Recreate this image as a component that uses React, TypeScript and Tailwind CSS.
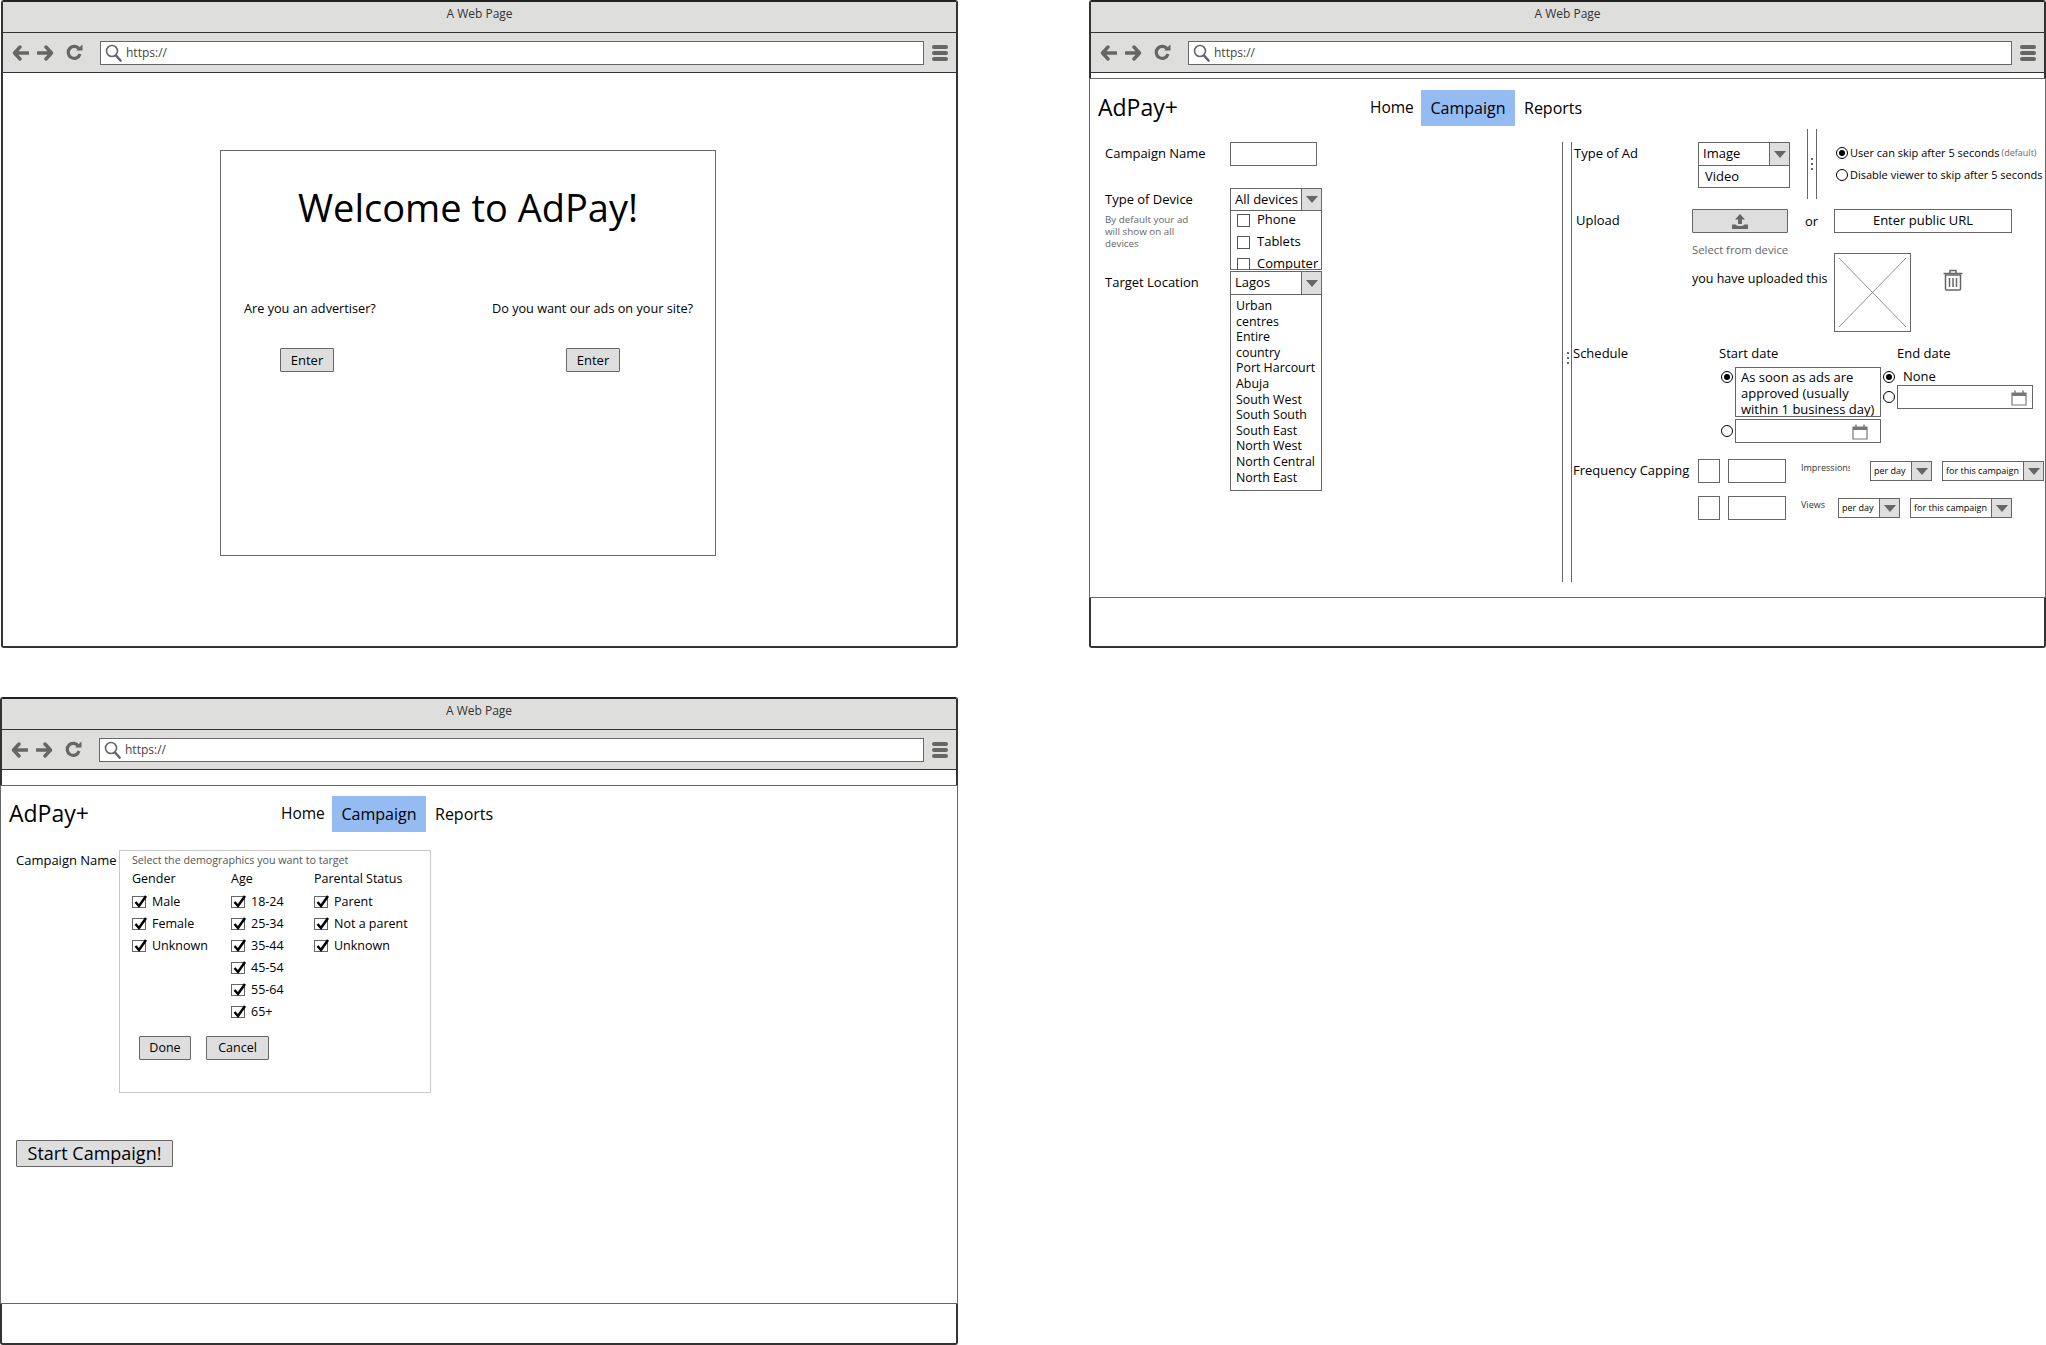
import type { ReactNode } from 'react'

function BackIcon({ flip }: { flip?: boolean }) {
  return (
    <svg width="17" height="16" viewBox="0 0 17 16" className={flip ? '-scale-x-100' : ''}>
      <path d="M8 2 2.5 8 8 14M3 8h13" fill="none" stroke="#666" strokeWidth="3.4" strokeLinecap="round" strokeLinejoin="round" />
    </svg>
  )
}

function ReloadIcon() {
  return (
    <svg width="17" height="17" viewBox="0 0 17 17">
      <path d="M13.5 5.5A6 6 0 1 0 14 10" fill="none" stroke="#666" strokeWidth="3.2" />
      <path d="M10 6.5h6.5V0.5z" fill="#666" />
    </svg>
  )
}

function SearchIcon() {
  return (
    <svg width="17" height="18" viewBox="0 0 17 18" className="shrink-0">
      <circle cx="7" cy="7" r="5.5" fill="none" stroke="#666" strokeWidth="1.6" />
      <path d="m11 11.5 4.5 5" stroke="#666" strokeWidth="2.6" strokeLinecap="round" />
    </svg>
  )
}

function Browser({ className, children }: { className: string; children?: ReactNode }) {
  return (
    <div className={`flex flex-col rounded-[3px] border-2 border-[#333] border-t-[#222] bg-white ${className}`}>
      <div className="flex h-[31px] shrink-0 justify-center border-b border-[#333] bg-[#dededd] pt-[4px] text-[12px] leading-[16px] text-[#333]">
        A Web Page
      </div>
      <div className="flex h-[40px] shrink-0 items-center border-b border-[#333] bg-[#dededd] pl-[9px] pr-[8px]">
        <BackIcon />
        <span className="ml-[8px] flex"><BackIcon flip /></span>
        <span className="ml-[12px] flex"><ReloadIcon /></span>
        <div className="ml-[17px] flex h-[24px] flex-1 items-center gap-[4px] border border-[#666] bg-white pl-[4px] text-[12px] text-[#444]">
          <SearchIcon />
          <span className="pt-[1px]">https://</span>
        </div>
        <div className="ml-[8px] flex w-[16px] flex-col gap-[2px]">
          <span className="h-[4px] rounded-[2px] bg-[#666]" />
          <span className="h-[4px] rounded-[2px] bg-[#666]" />
          <span className="h-[4px] rounded-[2px] bg-[#666]" />
        </div>
      </div>
      {children}
    </div>
  )
}

function GrayButton({ className, children }: { className: string; children: ReactNode }) {
  return (
    <div className={`flex items-center justify-center rounded-[1px] border border-[#666] bg-[#dedede] text-black ${className}`}>
      {children}
    </div>
  )
}

function Header() {
  return (
    <div className="flex h-[36px] shrink-0 items-center">
      <div className="w-[280px] pb-[2px] pl-[8px] text-[23px] leading-none">AdPay+</div>
      <span className="w-[41px] whitespace-nowrap text-[15.5px]">Home</span>
      <div className="ml-[10px] flex h-[36px] w-[94px] items-center justify-center bg-[#94bbf2] pb-[1px] text-[16px]">
        Campaign
      </div>
      <span className="ml-[9px] pb-[1px] text-[16px]">Reports</span>
    </div>
  )
}

function Arrow() {
  return (
    <svg width="12" height="7" viewBox="0 0 12 7">
      <path d="M0 0h12L6 7z" fill="#666" />
    </svg>
  )
}

function Combo({
  className,
  textClass = 'pl-[4px] text-[13px]',
  children,
}: {
  className: string
  textClass?: string
  children: ReactNode
}) {
  return (
    <div className={`flex border border-[#666] bg-white ${className}`}>
      <div className={`flex flex-1 items-center whitespace-nowrap ${textClass}`}>{children}</div>
      <div className="flex w-[20px] items-center justify-center border-l border-[#666] bg-[#dedede]">
        <Arrow />
      </div>
    </div>
  )
}

function Radio({ on }: { on?: boolean }) {
  return (
    <span className="flex h-[12px] w-[12px] shrink-0 items-center justify-center rounded-full border border-black bg-white">
      {on && <span className="h-[6px] w-[6px] rounded-full bg-black" />}
    </span>
  )
}

function CalendarIcon() {
  return (
    <svg width="16" height="17" viewBox="0 0 16 17">
      <path d="M1 4h14v12H1z" fill="#fff" stroke="#777" strokeWidth="1.2" />
      <path d="M1 4h14v3H1z" fill="#777" />
      <path d="M4 1.5V5M12 1.5V5" stroke="#777" strokeWidth="1.4" />
    </svg>
  )
}

function DateInput({ className }: { className: string }) {
  return (
    <div className={`flex h-[24px] items-center justify-end border border-[#666] bg-white ${className}`}>
      <CalendarIcon />
    </div>
  )
}

function Dots() {
  return (
    <div className="flex flex-col gap-[3px]">
      <span className="h-[2px] w-[2px] bg-[#666]" />
      <span className="h-[2px] w-[2px] bg-[#666]" />
      <span className="h-[2px] w-[2px] bg-[#666]" />
    </div>
  )
}

function UploadIcon() {
  return (
    <svg width="16" height="15" viewBox="0 0 16 15">
      <path d="M8 0 3 5.5h3v4.5h4V5.5h3z" fill="#666" />
      <path d="M0 10.5h3.5q1 1.5 4.5 1.5t4.5-1.5H16V15H0z" fill="#666" />
    </svg>
  )
}

function TrashIcon() {
  return (
    <svg width="20" height="22" viewBox="0 0 20 22">
      <path d="M2.5 6h15v14q0 1-1 1h-13q-1 0-1-1z" fill="#fff" stroke="#666" strokeWidth="1.5" />
      <path d="M0.5 4.5h19M7 4V1.5h6V4" fill="none" stroke="#666" strokeWidth="1.5" />
      <path d="M6.5 9v9M10 9v9M13.5 9v9" stroke="#666" strokeWidth="1.5" />
    </svg>
  )
}

function DeviceOption({ label }: { label: string }) {
  return (
    <div className="flex h-[22px] shrink-0 items-center pl-[6px] text-[13px]">
      <span className="h-[13px] w-[13px] border border-[#555]" />
      <span className="ml-[7px]">{label}</span>
    </div>
  )
}

const locations = [
  'Urban',
  'centres',
  'Entire',
  'country',
  'Port Harcourt',
  'Abuja',
  'South West',
  'South South',
  'South East',
  'North West',
  'North Central',
  'North East',
]

function CampaignLeft() {
  return (
    <div className="w-[472px] shrink-0 pl-[15px]">
      <div className="flex">
        <div className="w-[125px] pt-[2px] text-[13px]">Campaign Name</div>
        <div className="h-[24px] w-[87px] border border-[#666]" />
      </div>
      <div className="mt-[22px] flex">
        <div className="w-[125px]">
          <div className="pt-[1px] text-[13px] leading-[20px]">Type of Device</div>
          <div className="mt-[5px] text-[9.8px] leading-[12px] text-[#666]">
            By default your ad
            <br />
            will show on all
            <br />
            devices
          </div>
        </div>
        <div className="flex h-[82px] w-[92px] flex-col">
          <Combo className="h-[23px] shrink-0">All devices</Combo>
          <div className="h-[59px] overflow-hidden border-x border-b border-[#666]">
            <div className="-mt-[2px]">
              <DeviceOption label="Phone" />
              <DeviceOption label="Tablets" />
              <DeviceOption label="Computer" />
            </div>
          </div>
        </div>
      </div>
      <div className="mt-[1px] flex">
        <div className="w-[125px] pt-[1px] text-[13px] leading-[20px]">Target Location</div>
        <div className="w-[92px]">
          <Combo className="h-[24px]">Lagos</Combo>
          <div className="h-[196px] border-x border-b border-[#666] pl-[5px] pt-[3px] text-[12.4px] leading-[15.6px]">
            {locations.map((name) => (
              <div key={name}>{name}</div>
            ))}
          </div>
        </div>
      </div>
    </div>
  )
}

function FrequencyRow({
  className,
  label,
  labelClass,
}: {
  className: string
  label: string
  labelClass: string
}) {
  return (
    <div className={`flex ${className}`}>
      <div className="h-[24px] w-[22px] border border-[#666]" />
      <div className="ml-[8px] h-[24px] w-[58px] border border-[#666]" />
      <div className={`ml-[15px] h-[20px] pt-[1px] text-[9px] leading-[16px] text-[#333] ${labelClass}`}>
        <div className="w-[49px] overflow-hidden whitespace-nowrap">{label}</div>
      </div>
      <div className="flex pt-[2px]">
        <Combo className="h-[20px] w-[62px]" textClass="pl-[3px] text-[9px]">per day</Combo>
        <Combo className="ml-[10px] h-[20px] w-[102px]" textClass="pl-[3px] text-[9px]">for this campaign</Combo>
      </div>
    </div>
  )
}

function CampaignRight() {
  return (
    <div className="flex-1">
      <div className="flex">
        <div className="w-[126px] pl-[2px] pt-[1px] text-[13px] leading-[20px]">Type of Ad</div>
        <div className="w-[92px]">
          <Combo className="h-[24px]">Image</Combo>
          <div className="flex h-[22px] items-center border-x border-b border-[#666] pl-[6px] text-[13px]">Video</div>
        </div>
        <div className="ml-[17px] -mt-[13px] flex h-[70px] w-[10px] items-center justify-center border-x border-[#666]">
          <Dots />
        </div>
        <div className="ml-[19px] text-[11px] leading-[16px]">
          <div className="mt-[3px] flex h-[16px] items-center gap-[2px] whitespace-nowrap">
            <Radio on />
            User can skip after 5 seconds
            <span className="text-[9px] text-[#666]">(default)</span>
          </div>
          <div className="mt-[6px] flex h-[16px] items-center gap-[2px] whitespace-nowrap">
            <Radio />
            Disable viewer to skip after 5 seconds
          </div>
        </div>
      </div>
      <div className="mt-[10px] flex">
        <div className="w-[120px] pl-[4px] text-[13px] leading-[22px]">Upload</div>
        <GrayButton className="h-[24px] w-[96px]">
          <UploadIcon />
        </GrayButton>
        <div className="ml-[17px] w-[29px] text-[13px] leading-[24px]">or</div>
        <div className="flex h-[24px] w-[178px] items-center justify-center border border-[#666] text-[13px]">
          Enter public URL
        </div>
      </div>
      <div className="flex pl-[120px]">
        <div className="w-[142px] pt-[10px]">
          <div className="text-[11.3px] leading-[14px] text-[#666]">Select from device</div>
          <div className="mt-[13px] whitespace-nowrap text-[12.5px] leading-[17px]">you have uploaded this</div>
        </div>
        <div className="mt-[20px] h-[79px] w-[77px] border border-[#666] p-[4px]">
          <svg width="67" height="69" viewBox="0 0 67 69">
            <path d="M0 0 67 69M67 0 0 69" stroke="#777" strokeWidth="0.8" />
          </svg>
        </div>
        <div className="ml-[32px] mt-[36px]">
          <TrashIcon />
        </div>
      </div>
      <div className="mt-[11px] flex">
        <div className="relative w-[147px] pl-[1px] text-[13px] leading-[20px]">
          Schedule
          <div className="absolute -left-[5px] top-[9px]">
            <Dots />
          </div>
        </div>
        <div className="w-[162px]">
          <div className="text-[13px] leading-[20px]">Start date</div>
          <div className="mt-[4px] flex gap-[2px] pl-[2px]">
            <div className="pt-[4px]"><Radio on /></div>
            <div className="h-[50px] w-[146px] overflow-hidden border border-[#666] pl-[5px] pt-[1px] text-[13px] leading-[16px]">
              As soon as ads are approved (usually within 1 business day)
            </div>
          </div>
          <div className="mt-[2px] flex items-center gap-[2px] pl-[2px]">
            <Radio />
            <DateInput className="w-[146px] pr-[12px]" />
          </div>
        </div>
        <div className="pl-[2px]">
          <div className="pl-[14px] text-[13px] leading-[20px]">End date</div>
          <div className="mt-[5px] flex h-[17px] items-center">
            <Radio on />
            <span className="ml-[8px] text-[13px]">None</span>
          </div>
          <div className="flex items-center gap-[2px]">
            <Radio />
            <DateInput className="w-[136px] pr-[5px]" />
          </div>
        </div>
      </div>
      <div className="mt-[16px] flex">
        <div className="w-[126px] pl-[1px] text-[13px] leading-[22px]">Frequency Capping</div>
        <div>
          <FrequencyRow className="" label="Impressions" labelClass="w-[69px]" />
          <FrequencyRow className="mt-[13px]" label="Views" labelClass="w-[37px]" />
        </div>
      </div>
    </div>
  )
}

function CheckBox({ label }: { label: string }) {
  return (
    <div className="flex h-[22px] items-center text-[12.5px]">
      <span className="relative h-[12px] w-[14px] border border-[#666]">
        <svg width="16" height="15" viewBox="0 0 16 15" className="absolute -left-[1px] -top-[3px]">
          <path d="M3.5 8 7 12 14 2" fill="none" stroke="#000" strokeWidth="2.5" />
        </svg>
      </span>
      <span className="ml-[6px]">{label}</span>
    </div>
  )
}

function Demographics() {
  return (
    <div className="h-[243px] w-[312px] border border-[#c8c8c8] pl-[12px] pt-[1px]">
      <div className="text-[10.7px] leading-[16px] text-[#555]">Select the demographics you want to target</div>
      <div className="mt-[2px] flex">
        <div className="w-[99px]">
          <div className="h-[21px] text-[12.5px] leading-[18px]">Gender</div>
          {['Male', 'Female', 'Unknown'].map((v) => (
            <CheckBox key={v} label={v} />
          ))}
        </div>
        <div className="w-[83px]">
          <div className="h-[21px] text-[12.5px] leading-[18px]">Age</div>
          {['18-24', '25-34', '35-44', '45-54', '55-64', '65+'].map((v) => (
            <CheckBox key={v} label={v} />
          ))}
        </div>
        <div>
          <div className="h-[21px] text-[12.5px] leading-[18px]">Parental Status</div>
          {['Parent', 'Not a parent', 'Unknown'].map((v) => (
            <CheckBox key={v} label={v} />
          ))}
        </div>
      </div>
      <div className="ml-[7px] mt-[13px] flex text-[12.5px]">
        <GrayButton className="h-[24px] w-[52px]">Done</GrayButton>
        <GrayButton className="ml-[15px] h-[24px] w-[63px]">Cancel</GrayButton>
      </div>
    </div>
  )
}

export default function App() {
  return (
    <div className="h-[1345px] w-[2046px] overflow-hidden bg-white font-['Open_Sans',sans-serif] text-black">
      <div className="flex">
        <Browser className="ml-[1px] h-[648px] w-[957px]">
          <div className="ml-[217px] mt-[77px] h-[406px] w-[496px] border border-[#666]">
            <h1 className="mt-[30px] text-center text-[38px] font-normal leading-[52px]">Welcome to AdPay!</h1>
            <div className="mt-[65px] flex text-[12.7px] leading-[20px]">
              <div className="w-[271px] pl-[23px]">
                Are you an advertiser?
                <GrayButton className="ml-[36px] mt-[30px] h-[24px] w-[54px] text-[13px]">Enter</GrayButton>
              </div>
              <div className="whitespace-nowrap">
                Do you want our ads on your site?
                <GrayButton className="ml-[74px] mt-[30px] h-[24px] w-[54px] text-[13px]">Enter</GrayButton>
              </div>
            </div>
          </div>
        </Browser>
        <Browser className="ml-[131px] h-[648px] w-[957px]">
          <div className="-mx-[2px] mt-[5px] h-[520px] border border-[#666] bg-white">
            <div className="pt-[11px]"><Header /></div>
            <div className="mt-[16px] flex">
              <CampaignLeft />
              <div className="flex h-[440px] w-[9px] shrink-0 border-l border-[#666]" />
              <div className="flex h-[440px] flex-1 border-l border-[#666]">
                <CampaignRight />
              </div>
            </div>
          </div>
        </Browser>
      </div>
      <Browser className="mt-[49px] h-[648px] w-[958px]">
        <div className="-mx-[2px] mt-[15px] h-[519px] border border-[#666] bg-white">
          <div className="pt-[10px]"><Header /></div>
          <div className="mt-[18px] flex pl-[15px]">
            <div className="w-[103px] pt-[1px] text-[13px] leading-[18px]">Campaign Name</div>
            <Demographics />
          </div>
          <GrayButton className="ml-[15px] mt-[47px] h-[27px] w-[157px] text-[18px]">Start Campaign!</GrayButton>
        </div>
      </Browser>
    </div>
  )
}
